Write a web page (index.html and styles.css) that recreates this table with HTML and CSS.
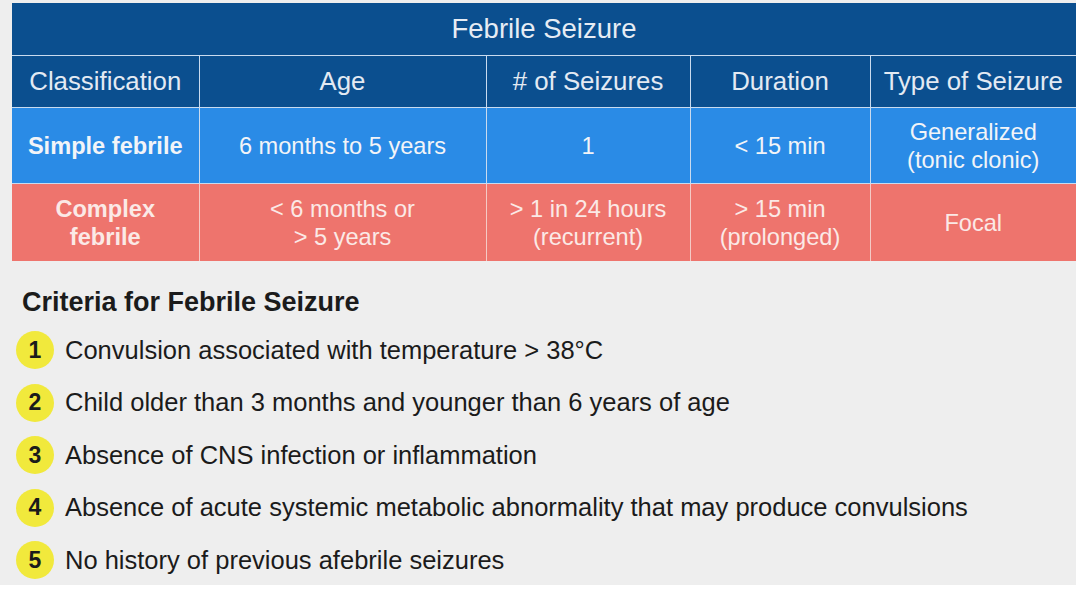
FILE: index.html
```html
<!DOCTYPE html>
<html>
<head>
<meta charset="utf-8">
<link rel="stylesheet" href="styles.css">
</head>
<body>
<div class="page">
  <table class="fs">
    <colgroup>
      <col class="c1"><col class="c2"><col class="c3"><col class="c4"><col class="c5">
    </colgroup>
    <tr class="title"><th colspan="5">Febrile Seizure</th></tr>
    <tr class="head">
      <th>Classification</th><th>Age</th><th># of Seizures</th><th>Duration</th><th>Type of Seizure</th>
    </tr>
    <tr class="simple">
      <td class="cls">Simple febrile</td><td>6 months to 5 years</td><td>1</td><td>&lt; 15 min</td><td>Generalized<br>(tonic clonic)</td>
    </tr>
    <tr class="complex">
      <td class="cls">Complex<br>febrile</td><td>&lt; 6 months or<br>&gt; 5 years</td><td>&gt; 1 in 24 hours<br>(recurrent)</td><td>&gt; 15 min<br>(prolonged)</td><td>Focal</td>
    </tr>
  </table>
  <div class="criteria">
    <h2>Criteria for Febrile Seizure</h2>
    <ul>
      <li><span class="num">1</span>Convulsion associated with temperature &gt; 38°C</li>
      <li><span class="num">2</span>Child older than 3 months and younger than 6 years of age</li>
      <li><span class="num">3</span>Absence of CNS infection or inflammation</li>
      <li><span class="num">4</span>Absence of acute systemic metabolic abnormality that may produce convulsions</li>
      <li><span class="num">5</span>No history of previous afebrile seizures</li>
    </ul>
  </div>
</div>
</body>
</html>
```
FILE: styles.css
```css
html, body { margin: 0; padding: 0; background: #ffffff; }
body { font-family: "Liberation Sans", Arial, sans-serif; }
.page {
  width: 1076px;
  height: 585px;
  background: #eeeeee;
  padding: 3px 0 0 12px;
  box-sizing: border-box;
}
.fs {
  width: 1064px;
  border-collapse: collapse;
  table-layout: fixed;
}
.c1 { width: 187px; }
.c2 { width: 287px; }
.c3 { width: 204px; }
.c4 { width: 180px; }
.c5 { width: 206px; }
.fs th, .fs td {
  text-align: center;
  padding: 0;
  color: #f2f4f8;
  border: 1px solid #c9dbef;
}
.title th {
  background: #0b4f8f;
  height: 52px;
  font-size: 27.5px;
  font-weight: normal;
  border-top: none;
  border-left: none;
  border-right: none;
  color: #e6ecf4;
}
.head th {
  background: #0b4f8f;
  height: 51px;
  font-size: 25.8px;
  font-weight: normal;
  color: #e3eaf3;
}
.simple td {
  background: #2a8be6;
  height: 75px;
  font-size: 23.6px;
  line-height: 28px;
}
.complex td {
  background: #ee746d;
  height: 77px;
  font-size: 23.6px;
  line-height: 28px;
  color: #fbe9e6;
  border-color: #f4cac6;
}
.fs tr th:first-child, .fs tr td:first-child { border-left: none; }
.fs tr th:last-child, .fs tr td:last-child { border-right: none; }
.complex td { border-bottom: none; }
.fs td.cls { font-weight: bold; }
.criteria { padding: 25px 0 0 10px; color: #1b1b1b; }
.criteria h2 {
  margin: 0 0 6px 0;
  font-size: 27px;
  font-weight: bold;
  line-height: 32px;
}
.criteria ul { list-style: none; margin: 0; padding: 0; }
.criteria li {
  display: flex;
  align-items: center;
  height: 52.5px;
  font-size: 25.5px;
  margin-left: -10px;
}
.num {
  width: 38px;
  height: 38px;
  border-radius: 50%;
  background: #f1e93c;
  display: flex;
  align-items: center;
  justify-content: center;
  font-weight: bold;
  font-size: 23px;
  margin: 0 11px 0 4px;
  flex: none;
}
```
